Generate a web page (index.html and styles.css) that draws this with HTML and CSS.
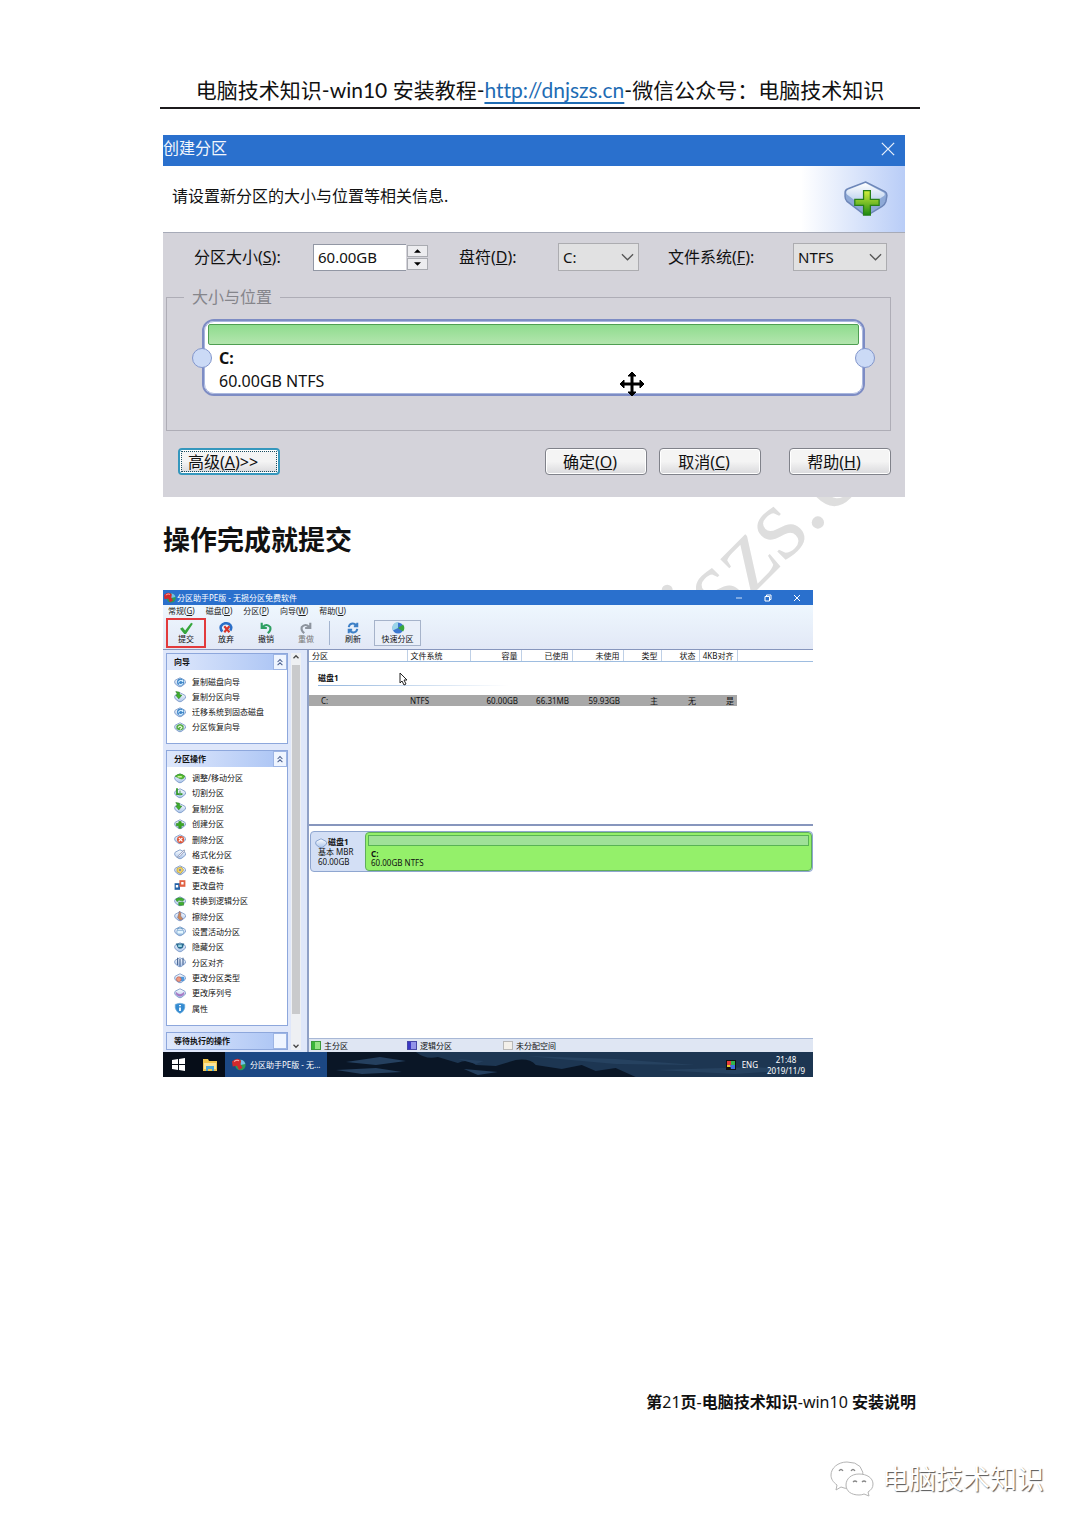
FILE: index.html
```html
<!DOCTYPE html>
<html lang="zh-CN">
<head>
<meta charset="utf-8">
<meta name="viewport" content="width=device-width, initial-scale=1">
<title>电脑技术知识 - win10 安装教程</title>
<link rel="stylesheet" href="styles.css">
</head>
<body>
<svg class="defs" aria-hidden="true">
  <defs>
    <linearGradient id="g-disk" x1="0" y1="0" x2="0" y2="1"><stop offset="0" stop-color="#fff"/><stop offset="1" stop-color="#a9c4ea"/></linearGradient>
    <linearGradient id="g-plus" x1="0" y1="0" x2="0" y2="1"><stop offset="0" stop-color="#d4f03c"/><stop offset="1" stop-color="#1d8a12"/></linearGradient>
    <symbol id="disk" viewBox="0 0 20 20"><path d="M10 3 18 7q2 2 1 5l-6 5q-3 2-6 0l-5-4q-2-3 0-6z" fill="url(#g-disk)" stroke="#7f9cc9" stroke-width="1.5"/></symbol>
    <symbol id="wizard" viewBox="0 0 20 20"><use href="#disk"/><circle cx="11" cy="10" r="6" fill="#3f86c8"/><path d="M7 11q4-7 8-1M15 10l-1-4M8 13q4 3 7-1" fill="none" stroke="#d8f0ff" stroke-width="1.8"/></symbol>
    <symbol id="copy" viewBox="0 0 20 20"><use href="#disk"/><path d="M3 1l6 1v4l4 1-5 6-5-6 3-1z" fill="#42b02e" stroke="#247d1d"/></symbol>
    <symbol id="restore" viewBox="0 0 20 20"><use href="#disk"/><path d="M4 8q6-6 12 0v5q-6 5-12 0z" fill="#53ab43"/><path d="M7 11q3-5 6 0l-3 3" fill="none" stroke="#efffdc" stroke-width="2"/></symbol>
    <symbol id="resize" viewBox="0 0 20 20"><use href="#disk"/><path d="M2 7q8-7 16 0-2 6-8 4z" fill="#55bd2e" stroke="#2d8a1e"/><path d="M6 8h7" stroke="#e8ffbe" stroke-width="2"/></symbol>
    <symbol id="split" viewBox="0 0 20 20"><use href="#disk"/><path d="M5 2v10h9" fill="none" stroke="#35992b" stroke-width="3"/><path d="M10 6v8" stroke="#65a870" stroke-width="2"/></symbol>
    <symbol id="create" viewBox="0 0 20 20"><use href="#disk"/><path d="M8 6h4v3h4v4h-4v4H8v-4H4V9h4z" fill="#38ac20" stroke="#267c19"/></symbol>
    <symbol id="delete" viewBox="0 0 20 20"><use href="#disk"/><circle cx="11" cy="11" r="6" fill="#e05739"/><path d="m8 8 6 6m0-6-6 6" stroke="#fff" stroke-width="2"/></symbol>
    <symbol id="format" viewBox="0 0 20 20"><use href="#disk"/><path d="M17 3 8 12l-3 4 5-2 8-9z" fill="#eef" stroke="#8996ae" stroke-width="1.3"/></symbol>
    <symbol id="label" viewBox="0 0 20 20"><use href="#disk"/><path d="m5 7 7-2 4 5-5 6-6-3z" fill="#f3d663" stroke="#a98c2d"/><circle cx="10" cy="10" r="2" fill="#7f8fb5"/></symbol>
    <symbol id="letter" viewBox="0 0 20 20"><path d="M1 7h9v11H1z" fill="#2461a6"/><path d="M9 2h10v11H9z" fill="#e16143"/><path d="M3 10h4v4H3zM12 5h4v4h-4z" fill="#fff"/></symbol>
    <symbol id="convert" viewBox="0 0 20 20"><use href="#disk"/><path d="M3 7q8-5 14 1l-3 2q-5-3-9 1zM8 12h8v5H8z" fill="#42b02e" stroke="#268423"/></symbol>
    <symbol id="wipe" viewBox="0 0 20 20"><use href="#disk"/><path d="M9 2q4 3 2 8l4 5-5 2-4-4z" fill="#ce8a58" stroke="#856b86"/></symbol>
    <symbol id="active" viewBox="0 0 20 20"><use href="#disk"/><path d="M5 9h11v6H5z" fill="#e4f6ff" stroke="#6499c4"/><path d="M5 7q5-4 10 0" fill="none" stroke="#6499c4" stroke-width="2"/></symbol>
    <symbol id="hide" viewBox="0 0 20 20"><use href="#disk"/><path d="M3 4h14l-2 7q-5 4-9 0z" fill="#28698f"/><path d="M7 6h6v4H7z" fill="#9bd6e5"/></symbol>
    <symbol id="align" viewBox="0 0 20 20"><use href="#disk"/><path d="M6 3v12M10 5v12M15 3v12" stroke="#4e6b98" stroke-width="2"/></symbol>
    <symbol id="type" viewBox="0 0 20 20"><use href="#disk"/><path d="M9 8h8v7H9z" fill="#4c9ae0"/><circle cx="8" cy="12" r="4" fill="#ef9a80" stroke="#b6584a"/></symbol>
    <symbol id="serial" viewBox="0 0 20 20"><use href="#disk"/><path d="M3 8q7 8 14 0v4q-7 8-14 0z" fill="#a77ac6"/></symbol>
    <symbol id="info" viewBox="0 0 20 20"><path d="M2 4q8-4 16 0v6q-2 7-8 9-6-2-8-9z" fill="#348bd1" stroke="#7bb3de"/><path d="M10 5v2m0 2v6" stroke="#fff" stroke-width="3"/></symbol>
    <symbol id="chevron" viewBox="0 0 14 8"><path d="m1 1 6 6 6-6" fill="none" stroke="#555" stroke-width="1.4"/></symbol>
    <symbol id="collapse" viewBox="0 0 10 10"><path d="m2 5 3-3 3 3M2 9l3-3 3 3" fill="none" stroke="#4f6390" stroke-width="1.3"/></symbol>
    <symbol id="logo" viewBox="0 0 20 20"><circle cx="12" cy="10" r="7.500" fill="#2c9c56"/><path d="M12 10V2.500a7.500 7.500 0 0 1 7 6z" fill="#72bce9"/><path d="M0 5q8-7 13-1l-1 5 3 5-5 3-3-6-6 1z" fill="#d32a2c"/><path d="M3 5q4-3 7-1" stroke="#ffb3aa" fill="none" stroke-width="1.500"/></symbol>
  </defs>
</svg>

<div class="page">
  <div class="watermark" aria-hidden="true">http://www.dnjszs.cn</div>

  <header class="page-header">电脑技术知识-win10 安装教程-<a href="http://dnjszs.cn">http://dnjszs.cn</a>-微信公众号：电脑技术知识</header>

  <main class="content">
    <section class="dialog" aria-label="创建分区">
      <div class="dialog-title">
        <span>创建分区</span>
        <button class="close" type="button" aria-label="关闭"><svg viewBox="0 0 16 16"><path d="m1 1 14 14M15 1 1 15" stroke="#e8f0fb" stroke-width="1.5"/></svg></button>
      </div>
      <div class="dialog-intro">
        <p>请设置新分区的大小与位置等相关信息.</p>
        <svg class="disk-plus" viewBox="0 0 46 38"><path d="M23 2 43 12q2 1 2 4l-1 6q-1 3-4 5L27 35q-3 1-6 0L4 22q-2-2-2-5v-4q0-3 3-4z" fill="#8ea9d6" stroke="#6d86b8" stroke-width="1.500"/><path d="M23 3 42 13q2 2-1 4L26 27q-3 2-6 0L4 15q-2-3 1-5z" fill="url(#g-disk)"/><path d="M21 11h7v9h9v6h-9v10h-7V26h-9v-6h9z" fill="url(#g-plus)" stroke="#278018" stroke-width="1.300"/></svg>
      </div>
      <form class="dialog-body">
        <div class="fields">
          <label for="size">分区大小(<u>S</u>):</label>
          <div class="spin">
            <input id="size" type="text" value="60.00GB">
            <div class="spin-buttons">
              <button type="button" aria-label="增大"><svg viewBox="0 0 8 4"><path d="M0 4h8L4 0z"/></svg></button>
              <button type="button" aria-label="减小"><svg viewBox="0 0 8 4"><path d="M0 0h8L4 4z"/></svg></button>
            </div>
          </div>
          <label for="letter-select">盘符(<u>D</u>):</label>
          <div class="select"><select id="letter-select"><option>C:</option></select><svg><use href="#chevron"/></svg></div>
          <label for="fs-select">文件系统(<u>F</u>):</label>
          <div class="select"><select id="fs-select"><option>NTFS</option></select><svg><use href="#chevron"/></svg></div>
        </div>
        <fieldset class="group">
          <legend>大小与位置</legend>
          <div class="volume">
            <div class="volume-bar"></div>
            <strong>C:</strong>
            <span>60.00GB NTFS</span>
            <i class="knob knob-left"></i><i class="knob knob-right"></i>
            <svg class="move" viewBox="0 0 26 26"><path d="m13 1 4 4h-3v7h7V9l4 4-4 4v-3h-7v7h3l-4 4-4-4h3v-7H5v3l-4-4 4-4v3h7V5H9z" stroke="#000"/></svg>
          </div>
        </fieldset>
        <div class="actions">
          <button class="btn btn-focus" type="button">高级(<u>A</u>)&gt;&gt;</button>
          <span class="spacer"></span>
          <button class="btn" type="button">确定(<u>O</u>)</button>
          <button class="btn" type="button">取消(<u>C</u>)</button>
          <button class="btn btn-help" type="button">帮助(<u>H</u>)</button>
        </div>
      </form>
    </section>

    <h1>操作完成就提交</h1>

    <section class="app" aria-label="分区助手">
      <div class="app-title">
        <svg class="icon"><use href="#logo"/></svg>
        <span>分区助手PE版 - 无损分区免费软件</span>
        <button type="button" aria-label="最小化"><svg viewBox="0 0 8 8"><path d="M1 4h6" stroke="#cfe0f7"/></svg></button>
        <button type="button" aria-label="还原"><svg viewBox="0 0 8 8"><path d="M1 2.500h4.500V7H1zM2.500 2V1H7v4.500H6" fill="none" stroke="#fff"/></svg></button>
        <button type="button" aria-label="关闭"><svg viewBox="0 0 8 8"><path d="m1 1 6 6M7 1 1 7" stroke="#fff"/></svg></button>
      </div>
      <div class="app-top">
        <nav class="menu">
          <a href="#">常规(<u>G</u>)</a><a href="#">磁盘(<u>D</u>)</a><a href="#">分区(<u>P</u>)</a><a href="#">向导(<u>W</u>)</a><a href="#">帮助(<u>U</u>)</a>
        </nav>
        <div class="toolbar">
          <button class="tool tool-marked" type="button"><svg viewBox="0 0 16 14"><path d="M1 8 4 6l3 4 7-9 2 1-8 12H6z" fill="#36a63c"/></svg>提交</button>
          <button class="tool" type="button"><svg viewBox="0 0 16 14"><path d="M4 11Q1 9 2 5q3-5 9-3 5 3 2 8" fill="none" stroke="#2b6fc8" stroke-width="3"/><path d="m6 5 6 7m0-7-6 7" stroke="#d8342a" stroke-width="2.500"/></svg>放弃</button>
          <button class="tool" type="button"><svg viewBox="0 0 16 14"><path d="M3 1v6h6M4 6q5-5 9 0 1 4-3 7" fill="none" stroke="#2e9f62" stroke-width="2.500"/></svg>撤销</button>
          <button class="tool tool-off" type="button"><svg viewBox="0 0 16 14"><path d="M13 1v6H7M12 6Q7 1 3 6q-1 4 3 7" fill="none" stroke="#8d949e" stroke-width="2.500"/></svg>重做</button>
          <span class="tool-line"></span>
          <button class="tool" type="button"><svg viewBox="0 0 16 14"><path d="M3 6q1-5 6-4l4 2M13 1v4H9M13 8q-1 5-6 4l-4-2M3 13V9h4" fill="none" stroke="#3d7fc6" stroke-width="2.300"/></svg>刷新</button>
          <button class="tool tool-quick" type="button"><svg viewBox="0 0 16 14"><circle cx="8" cy="7" r="6.500" fill="#3d78cf"/><path d="M8 7V0a7 7 0 0 0-6 10z" fill="#9bd5e8"/><path d="m8 7 6 4a7 7 0 0 0 0-8z" fill="#39a63b"/></svg>快速分区</button>
        </div>
      </div>

      <div class="workspace">
        <aside class="side">
          <div class="panels">
            <section class="panel">
              <h2>向导<button type="button" aria-label="收起"><svg><use href="#collapse"/></svg></button></h2>
              <ul>
                <li><svg class="icon"><use href="#wizard"/></svg>复制磁盘向导</li>
                <li><svg class="icon"><use href="#copy"/></svg>复制分区向导</li>
                <li><svg class="icon"><use href="#wizard"/></svg>迁移系统到固态磁盘</li>
                <li><svg class="icon"><use href="#restore"/></svg>分区恢复向导</li>
              </ul>
            </section>
            <section class="panel panel-grow">
              <h2>分区操作<button type="button" aria-label="收起"><svg><use href="#collapse"/></svg></button></h2>
              <ul>
                <li><svg class="icon"><use href="#resize"/></svg>调整/移动分区</li>
                <li><svg class="icon"><use href="#split"/></svg>切割分区</li>
                <li><svg class="icon"><use href="#copy"/></svg>复制分区</li>
                <li><svg class="icon"><use href="#create"/></svg>创建分区</li>
                <li><svg class="icon"><use href="#delete"/></svg>删除分区</li>
                <li><svg class="icon"><use href="#format"/></svg>格式化分区</li>
                <li><svg class="icon"><use href="#label"/></svg>更改卷标</li>
                <li><svg class="icon"><use href="#letter"/></svg>更改盘符</li>
                <li><svg class="icon"><use href="#convert"/></svg>转换到逻辑分区</li>
                <li><svg class="icon"><use href="#wipe"/></svg>擦除分区</li>
                <li><svg class="icon"><use href="#active"/></svg>设置活动分区</li>
                <li><svg class="icon"><use href="#hide"/></svg>隐藏分区</li>
                <li><svg class="icon"><use href="#align"/></svg>分区对齐</li>
                <li><svg class="icon"><use href="#type"/></svg>更改分区类型</li>
                <li><svg class="icon"><use href="#serial"/></svg>更改序列号</li>
                <li><svg class="icon"><use href="#info"/></svg>属性</li>
              </ul>
            </section>
            <section class="panel">
              <h2>等待执行的操作<button type="button" aria-label="展开"></button></h2>
            </section>
          </div>
          <div class="scroll">
            <svg viewBox="0 0 8 6"><path d="m2 4 2-2 2 2" fill="none" stroke="#444"/></svg>
            <div class="thumb"></div>
            <svg viewBox="0 0 8 6"><path d="m2 2 2 2 2-2" fill="none" stroke="#444"/></svg>
          </div>
        </aside>

        <div class="main">
          <div class="list">
            <table>
              <colgroup><col class="c-part"><col class="c-fs"><col class="c-num"><col class="c-num"><col class="c-num"><col class="c-flag"><col class="c-flag"><col class="c-flag"><col></colgroup>
              <thead><tr><th>分区</th><th>文件系统</th><th>容量</th><th>已使用</th><th>未使用</th><th>类型</th><th>状态</th><th>4KB对齐</th><th></th></tr></thead>
              <tbody>
                <tr class="disk-row"><th colspan="9"><span>磁盘1</span></th></tr>
                <tr class="data-row"><td>C:</td><td>NTFS</td><td>60.00GB</td><td>66.31MB</td><td>59.93GB</td><td>主</td><td>无</td><td>是</td><td></td></tr>
              </tbody>
            </table>
            <svg class="pointer" viewBox="0 0 9 14"><path d="M1 1v10l2-2 2 4 2-1-2-4h3z" fill="#fff" stroke="#222"/></svg>
          </div>
          <div class="map">
            <div class="disk">
              <div class="disk-info">
                <b><svg class="icon"><use href="#disk"/></svg>磁盘1</b>
                <span>基本 MBR</span>
                <span>60.00GB</span>
              </div>
              <div class="disk-part">
                <div class="disk-used"></div>
                <b>C:</b>
                <span>60.00GB NTFS</span>
              </div>
            </div>
          </div>
          <div class="legend">
            <span><i class="key key-primary"></i>主分区</span>
            <span><i class="key key-logical"></i>逻辑分区</span>
            <span><i class="key key-free"></i>未分配空间</span>
          </div>
        </div>
      </div>

      <div class="taskbar">
        <svg class="clouds" viewBox="0 0 488 25" preserveAspectRatio="none" aria-hidden="true"><path d="M0 0h488v25H0z" fill="#1d3652"/><path d="M0 0h90q10 8 22 5l20 6q10-5 18 2l20 1 20-6q14-2 20 5l26 4 20-4 14 6 20-3 20 9H0z" fill="#0a1626"/><path d="m20 10 34-5 26 4-30 4zM10 18l40-2 26 4-40 2zM132 7l26 2-8 3zM138 17l34 3-20 3z" fill="#25405f"/><path d="m200 4 90 3 80 6-80-1zM330 18l100-3 40 3-60 4z" fill="#2f4e6e" opacity=".5"/></svg>
        <button type="button" aria-label="开始"><svg class="start" viewBox="0 0 13 13"><path d="M0 2l6-1v5H0zM7 1l6-1v6H7zM0 7h6v5l-6-1zM7 7h6v6l-6-1z" fill="#fff"/></svg></button>
        <button type="button" aria-label="文件资源管理器"><svg class="folder" viewBox="0 0 14 12"><path d="M0 0h5l1 2h8v10H0z" fill="#f2c64b"/><path d="M1 4h12v6H1z" fill="#fbe59a"/><path d="M3 7h8v5H9v-2H5v2H3z" fill="#4aa8d8"/></svg></button>
        <button class="task" type="button"><svg class="icon"><use href="#logo"/></svg>分区助手PE版 - 无...</button>
        <span class="spacer"></span>
        <svg class="palette" viewBox="0 0 10 10"><path d="M0 0h10v10H0z" fill="#111"/><path d="M1 1h4v4H1z" fill="#e33a3a"/><path d="M5 1h4v4H5z" fill="#32b54a"/><path d="M1 5h4v2H1z" fill="#e7c92f"/><path d="M4 5h5v4H5z" fill="#3e6fe0"/></svg>
        <span class="lang">ENG</span>
        <span class="clock"><span>21:48</span><span>2019/11/9</span></span>
      </div>
    </section>
  </main>

  <footer class="page-footer">
    <p class="page-number"><b>第</b>21<b>页</b>-<b>电脑技术知识</b>-win10 <b>安装说明</b></p>
    <div class="account">
      <svg viewBox="0 0 44 38"><g fill="#fff" stroke="#b4b4b4"><path d="M17 2C8 2 1 8 1 15c0 4 2 7 6 10l-1 5 5-3q4 2 8 1 11-1 14-8 2-18-16-18z"/><path d="M29 14c-8 0-13 5-13 11s5 10 13 10q3 0 5-1l5 2-1-4c3-2 5-4 5-8 0-6-6-10-14-10z"/></g><g fill="none" stroke="#888" stroke-width="1.300"><path d="M9 11q2-3 4 0M21 11q2-3 4 0M23 22q2-2 4 0M32 22q2-2 4 0"/></g></svg>
      <span>电脑技术知识</span>
    </div>
  </footer>
</div>
</body>
</html>
```

FILE: styles.css
```css
*, *::before, *::after { box-sizing: border-box; }

body {
  margin: 0;
  background: #fff;
  color: #111;
  font-family: "Noto Sans", "Noto Sans CJK SC", sans-serif;
}

p, h1, h2, ul { margin: 0; padding: 0; }
ul { list-style: none; }
button, input, select { margin: 0; padding: 0; border: 0; background: none; color: inherit; font: inherit; }
svg { display: block; flex: none; }
u { text-underline-offset: 1px; }
.defs { position: absolute; width: 0; height: 0; }
.spacer { flex: 1; }

.page {
  position: relative;
  display: flex;
  flex-direction: column;
  min-height: 100vh;
  overflow: hidden;
}

.watermark {
  position: absolute;
  left: 218px;
  top: 1006px;
  color: #dedede;
  font: 104px/1 "Liberation Serif", serif;
  white-space: nowrap;
  transform: rotate(-45deg);
  transform-origin: 0 0;
}

/* Running header */
.page-header {
  margin: 75px 160px 0;
  padding-bottom: 2px;
  border-bottom: 2px solid #1c1a1c;
  font-family: Lato, "Noto Sans CJK SC", sans-serif;
  font-size: 21px;
  font-variant-ligatures: none;
  line-height: 30px;
  text-align: center;
  white-space: nowrap;
}
.page-header a { color: #1e6cb4; text-underline-offset: 4px; }

.content { position: relative; margin: 26px 175px 0 163px; }

/* Create partition dialog */
.dialog { background: #d4d3da; font-size: 16px; }
.dialog-title {
  display: flex;
  justify-content: space-between;
  height: 31px;
  padding-right: 9px;
  background: #2a70cd;
  color: #f2f6fc;
  line-height: 26px;
}
.close { width: 16px; height: 28px; }
.close svg { width: 16px; height: 14px; }
.dialog-intro {
  display: flex;
  align-items: center;
  justify-content: space-between;
  height: 67px;
  padding: 0 17px 8px 9px;
  border-bottom: 1px solid #a7abb8;
  background: linear-gradient(90deg, #fff 86%, #b9cdf7);
}
.disk-plus { width: 45px; height: 37px; margin-top: 6px; }
.dialog-body { padding: 10px 14px 22px 3px; }
.fields {
  display: grid;
  grid-template-columns: 119fr 146fr 99fr 110fr 125fr 94fr;
  align-items: center;
  padding: 0 4px 0 28px;
  line-height: 26px;
}
.spin { display: flex; width: 115px; height: 27px; align-items: center; }
.spin input {
  width: 93px;
  height: 27px;
  padding-left: 4px;
  border: 1px solid #9297a4;
  border-right: 0;
  background: #fff;
  font-size: 15px;
}
.spin-buttons { display: grid; flex: 1; gap: 1px; margin-left: 1px; }
.spin-buttons button {
  display: grid;
  place-items: center;
  height: 12px;
  border: 1px solid #a9abb1;
  background: #ececef;
}
.spin-buttons svg { width: 7px; height: 4px; }
.select { display: grid; align-items: center; width: 81px; }
.select:last-child { width: 94px; }
.select > * { grid-area: 1 / 1; }
.select select {
  height: 28px;
  padding-left: 4px;
  border: 1px solid #acacb0;
  border-radius: 0;
  background: #e1e1e2;
  appearance: none;
  font-size: 15px;
}
.select svg { justify-self: end; width: 13px; height: 8px; margin-right: 5px; pointer-events: none; }
.group {
  min-width: 0;
  margin: 14px 0 17px;
  padding: 10px 25px 34px 35px;
  border: 1px solid #aeadb6;
}
.group legend { margin-left: -18px; padding: 0 8px; color: #85858b; line-height: 24px; }
.volume {
  position: relative;
  display: flex;
  flex-direction: column;
  height: 77px;
  padding: 3px 4px 0 4px;
  border: 2px solid #7d8cc4;
  border-radius: 12px;
  outline: 1px solid #a9b7de;
  outline-offset: -3px;
  background: #fff;
  line-height: 23px;
}
.volume strong, .volume span { padding-left: 11px; }
.volume-bar {
  flex: none;
  height: 21px;
  margin-bottom: 2px;
  border: 1px solid #4f9e52;
  border-radius: 2px;
  background: linear-gradient(#8fdc8e, #b3e5ae);
}
.knob {
  position: absolute;
  top: 27px;
  width: 20px;
  height: 20px;
  border: 1px solid #8296cc;
  border-radius: 50%;
  background: #cbdaf6;
}
.knob-left { left: -12px; }
.knob-right { right: -12px; }
.move { position: absolute; left: 63%; bottom: -3px; width: 26px; height: 26px; }
.actions { display: flex; gap: 12px; padding-left: 12px; }
.btn {
  width: 102px;
  height: 27px;
  padding-right: 12px;
  border: 1px solid #80828a;
  border-radius: 4px;
  background: linear-gradient(#f4f4f4 50%, #d9d9dc);
  box-shadow: inset 0 0 0 1px #fff;
  line-height: 22px;
}
.btn-help { margin-left: 16px; }
.btn-focus {
  border: 2px solid #3597bd;
  outline: 1px dotted #174d60;
  outline-offset: -4px;
}

h1 { margin: 23px 0 30px; font-size: 27px; line-height: 40px; font-weight: 700; }

/* Partition manager window */
.app { max-width: 650px; font-size: 8px; line-height: 10px; }
.icon { width: 12px; height: 12px; }
.app-title {
  display: flex;
  align-items: center;
  gap: 21px;
  height: 15px;
  padding: 0 12px 0 1px;
  background: #2a70cd;
  color: #fff;
}
.app-title span { flex: 1; margin-left: -20px; }
.app-title button svg { width: 8px; height: 8px; }
.app-top { border-bottom: 1px solid #8796bd; background: linear-gradient(#eef7fe, #e2e8f6); }
.menu { display: flex; gap: 11px; padding-left: 5px; line-height: 12px; }
.menu a { color: #222; text-decoration: none; }
.toolbar { display: flex; align-items: center; height: 32px; padding: 0 0 1px 3px; }
.tool {
  display: flex;
  flex-direction: column;
  align-items: center;
  justify-content: center;
  width: 40px;
  height: 30px;
  line-height: 9px;
}
.tool svg { width: 14px; height: 12px; }
.tool-marked { border: 2px solid #e23a3c; }
.tool-off { color: #777; }
.tool-line { width: 1px; height: 24px; margin: 0 3px; background: #a3b4cf; }
.tool-quick { width: 47px; height: 26px; margin-left: 1px; border: 1px solid #a6b3ca; background: #e9eff9; }
.workspace { display: flex; height: 402px; background: #fff; }
.side {
  display: flex;
  width: 146px;
  padding: 3px 6px 2px 3px;
  border-right: 2px solid #8fa0c6;
  background: #dfe7fa;
  gap: 3px;
}
.panels { display: flex; flex: 1; flex-direction: column; gap: 6px; }
.panel { display: flex; flex-direction: column; border: 1px solid #8da7dc; background: #fff; }
.panel h2 {
  display: flex;
  justify-content: space-between;
  padding-left: 7px;
  background: linear-gradient(90deg, #dfe8fc, #a9c3f4);
  font-size: 8px;
  line-height: 16px;
}
.panel h2 button { width: 14px; border: 1px solid #9db5e4; background: #eff5ff; }
.panel h2 button svg { width: 8px; height: 8px; margin: auto; }
.panel ul { display: flex; flex: 1; flex-direction: column; justify-content: space-between; padding: 4px 7px 9px; }
.panel li { display: flex; align-items: center; gap: 6px; line-height: 15px; }
.panel-grow { flex: 1; }
.panel-grow ul { padding: 3px 7px 9px; }
.scroll { display: flex; flex-direction: column; align-items: center; width: 10px; background: #eef0f3; }
.scroll svg { width: 10px; height: 8px; }
.thumb { flex: 1; width: 8px; margin: 4px 0 28px; background: #c9cacc; }
.main { display: flex; flex: 1; flex-direction: column; min-width: 0; }
.list { position: relative; height: 176px; border-bottom: 2px solid #8796bd; }
.list table { width: 100%; border-collapse: collapse; table-layout: fixed; }
.c-part { width: 98px; }
.c-fs { width: 63px; }
.c-num { width: 51px; }
.c-flag { width: 38px; }
.list th, .list td { padding: 0 3px; font-weight: 400; text-align: right; white-space: nowrap; }
.list thead th { height: 11px; border-right: 1px solid #bfd0e6; border-bottom: 1px solid #9ebde0; line-height: 9px; }
.list thead th:last-child { border-right: 0; }
.list tr > :nth-child(-n+2) { text-align: left; }
.list .disk-row th { height: 34px; padding: 0 9px; font-weight: 700; }
.disk-row span {
  display: block;
  width: 190px;
  border-bottom: 1px solid;
  border-image: linear-gradient(90deg, #8fb3dc, #fff) 1;
  line-height: 14px;
}
.data-row td { height: 11px; background: #a8a8a8; line-height: 10px; }
.list .data-row td:first-child { padding-left: 12px; }
.data-row td:last-child { background: none; }
.pointer { position: absolute; left: 90px; top: 22px; width: 9px; height: 14px; }
.map { flex: 1; padding: 5px 0 0 1px; }
.disk {
  display: flex;
  height: 41px;
  border: 1px solid #8fa6d0;
  border-radius: 4px;
  background: #d3dff5;
}
.disk-info { display: flex; flex-direction: column; width: 54px; padding: 5px 0 0 7px; white-space: nowrap; }
.disk-info b { display: flex; gap: 1px; height: 10px; margin-left: -3px; }
.disk-part {
  display: flex;
  flex: 1;
  flex-direction: column;
  padding: 2px;
  border: 1px solid #5fae5b;
  border-radius: 4px;
  background: #94f06a;
  line-height: 9px;
}
.disk-part b, .disk-part span { padding-left: 3px; }
.disk-used { height: 11px; margin-bottom: 3px; border: 1px solid #58b354; background: #9fe198; }
.legend { display: flex; height: 14px; padding-left: 2px; border-top: 1px solid #a8b8d6; background: #dfe6f3; line-height: 14px; }
.legend span { display: flex; gap: 3px; align-items: center; width: 96px; }
.key { width: 10px; height: 9px; border: 1px solid; }
.key-primary { border-color: #3c9a3c; background: linear-gradient(90deg, #3ab53a 40%, #93e283 40%); }
.key-logical { border-color: #4747a8; background: linear-gradient(90deg, #3b38c4 40%, #9293e8 40%); }
.key-free { border-color: #b8b8b8; background: #f3f0ea; }
.taskbar {
  position: relative;
  display: flex;
  align-items: center;
  height: 25px;
  padding-right: 8px;
  background: #060d18;
  color: #fff;
}
.taskbar > * { position: relative; }
.taskbar .clouds { position: absolute; right: 0; top: 0; width: 75%; height: 25px; }
.taskbar button { width: 31px; height: 25px; }
.taskbar button svg { margin: auto; }
.start { width: 13px; height: 13px; }
.folder { width: 14px; height: 12px; }
.taskbar .task { display: flex; align-items: center; gap: 4px; width: 102px; padding-left: 7px; background: #1c4884; white-space: nowrap; }
.taskbar .task svg { width: 14px; height: 14px; margin: 0; }
.palette { width: 10px; height: 10px; }
.lang { margin: 0 9px 0 6px; }
.clock { display: flex; flex-direction: column; align-items: center; line-height: 11px; }

/* Page footer */
.page-footer { position: relative; margin-top: auto; }
.page-number {
  margin-right: 164px;
  font-size: 16px;
  line-height: 24px;
  text-align: right;
}
.account {
  display: flex;
  align-items: center;
  justify-content: flex-end;
  gap: 8px;
  margin: 43px 36px 26px;
  color: #fff;
  font-size: 27px;
  line-height: 44px;
  text-shadow: 1px 1px 1px #555;
}
.account svg { width: 44px; height: 38px; }
```
